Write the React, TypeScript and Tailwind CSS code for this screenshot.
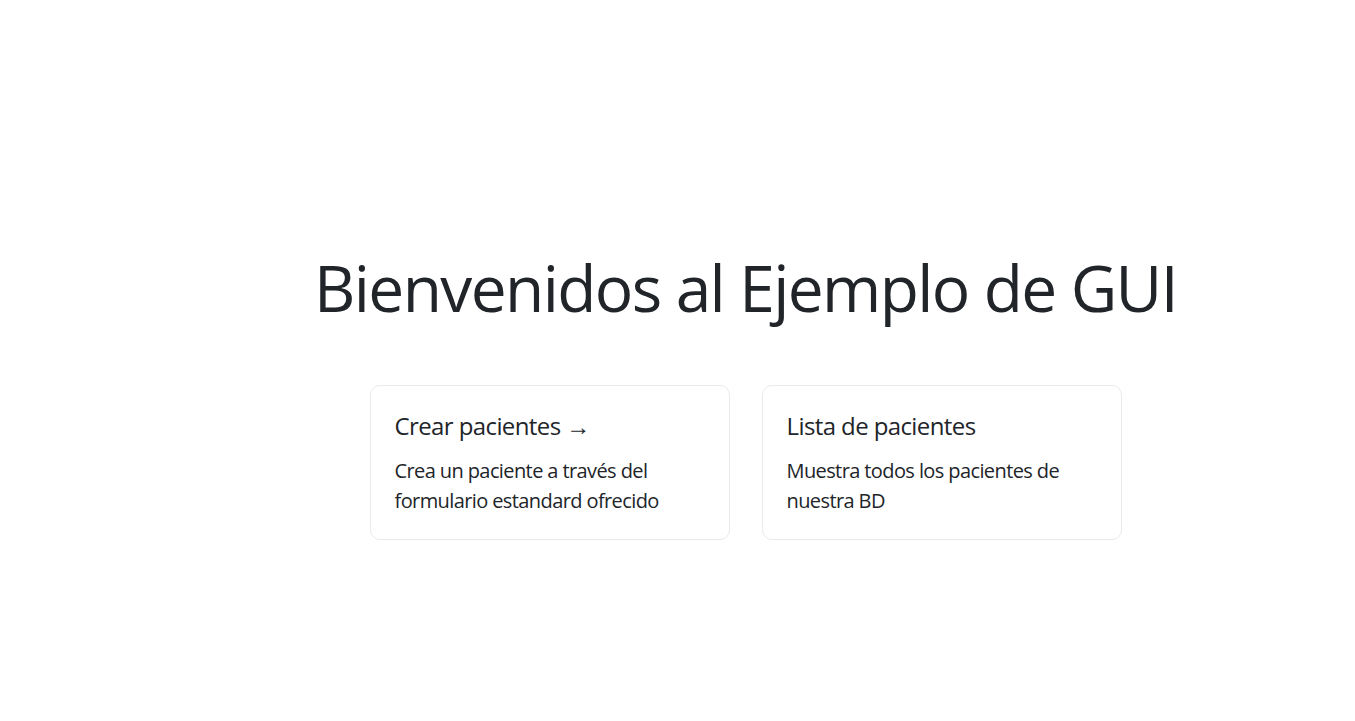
import React from 'react';

const cards = [
    {
        title: 'Crear pacientes →',
        text: 'Crea un paciente a través del formulario estandard ofrecido',
    },
    {
        title: 'Lista de pacientes',
        text: 'Muestra todos los pacientes de nuestra BD',
    },
];

export default function App() {
    return (
        <div
            className="min-h-screen bg-white text-[#212529] pl-[136px]"
            style={{ fontFamily: '"Open Sans", "Noto Sans", sans-serif' }}
        >
            <main className="flex flex-col items-center pt-[251px]">
                <h1 className="m-0 text-[64px] leading-[1.15] font-normal text-center tracking-[-1.6px]">
                    Bienvenidos al Ejemplo de GUI
                </h1>

                {/* Cards */}
                <div className="mt-11 flex flex-wrap justify-center items-center w-[800px]">
                    {cards.map((card) => (
                        <a
                            key={card.title}
                            href="#"
                            className="m-4 basis-[45%] px-6 pt-[26px] pb-[23px] text-left border border-[#eaeaea] rounded-[10px] text-[#212529]"
                        >
                            <h2 className="mb-4 text-2xl leading-[1.2] font-normal tracking-[-0.6px]">{card.title}</h2>
                            <p className="m-0 text-xl leading-normal tracking-[-0.6px]">{card.text}</p>
                        </a>
                    ))}
                </div>
            </main>
        </div>
    );
}
